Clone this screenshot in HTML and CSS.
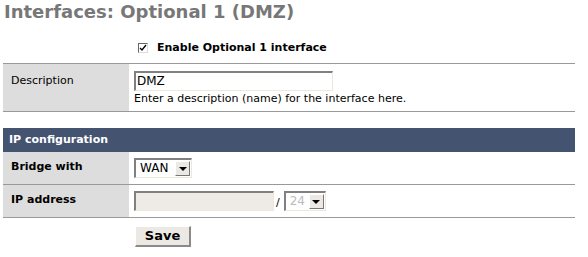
FILE: index.html
```html
<!DOCTYPE html>
<html>
<head>
<meta charset="utf-8">
<link rel="stylesheet" href="styles.css">
</head>
<body>
<h1 class="title">Interfaces: Optional 1 (DMZ)</h1>
<div class="form">
  <div class="enable-row">
    <div class="spacer-cell"></div>
    <div class="enable-cell">
      <span class="checkbox checked">
        <svg width="8" height="8" viewBox="0 0 8 8"><path d="M1 4 L3 6 L7 1" fill="none" stroke="#000" stroke-width="1.3"/></svg>
      </span>
      <span class="enable-label">Enable Optional 1 interface</span>
    </div>
  </div>
  <div class="row row-first">
    <div class="label-cell normal">Description</div>
    <div class="value-cell desc-cell">
      <div class="textbox">DMZ</div>
      <div class="help">Enter a description (name) for the interface here.</div>
    </div>
  </div>
  <div class="gap"></div>
  <div class="topic">IP configuration</div>
  <div class="row">
    <div class="label-cell">Bridge with</div>
    <div class="value-cell">
      <div class="select select-wan"><span class="sel-text">WAN</span><span class="sel-btn"><span class="arrow"></span></span></div>
    </div>
  </div>
  <div class="row">
    <div class="label-cell">IP address</div>
    <div class="value-cell ip-cell">
      <div class="textbox disabled ipbox"></div>
      <span class="slash">/</span>
      <div class="select select-mask disabled"><span class="sel-text">24</span><span class="sel-btn"><span class="arrow"></span></span></div>
    </div>
  </div>
  <div class="save-row">
    <div class="spacer-cell"></div>
    <div class="save-cell"><span class="button">Save</span></div>
  </div>
</div>
</body>
</html>
```

FILE: styles.css
```css
html, body {
  margin: 0;
  padding: 0;
  background: #fff;
}
body {
  font-family: "DejaVu Sans", Verdana, sans-serif;
  font-size: 11px;
  color: #000;
}
.title {
  margin: 0;
  padding: 1px 0 0 4px;
  height: 24px;
  font-size: 18px;
  font-weight: bold;
  color: #777;
  line-height: 22px;
}
.form {
  margin: 0 13px 0 3px;
  width: 572px;
}
.enable-row {
  display: flex;
  height: 39px;
  padding-top: 15px;
  box-sizing: border-box;
  border-bottom: 1px solid #999;
}
.spacer-cell {
  width: 126px;
  flex: none;
}
.enable-cell {
  display: flex;
  align-items: center;
  padding-left: 9px;
  height: 14px;
}
.checkbox {
  width: 8px;
  height: 8px;
  border-top: 1px solid #666;
  border-left: 1px solid #666;
  border-right: 1px solid #ddd;
  border-bottom: 1px solid #ddd;
  background: #fff;
  display: inline-flex;
  align-items: center;
  justify-content: center;
  margin-top: 1px;
}
.enable-label {
  font-weight: bold;
  margin-left: 9px;
}
.row {
  display: flex;
  border-bottom: 1px solid #999;
}
.label-cell {
  width: 126px;
  flex: none;
  background: #ddd;
  padding: 8px 0 0 8px;
  box-sizing: border-box;
  font-weight: bold;
  line-height: 13px;
}
.label-cell.normal {
  font-weight: normal;
  padding-top: 10px;
}
.value-cell {
  flex: 1;
  padding: 6px 0 5px 5px;
  height: 32px;
  box-sizing: border-box;
}
.desc-cell {
  height: 47px;
  padding-top: 7px;
}
.textbox {
  width: 199px;
  height: 20px;
  box-sizing: border-box;
  border-top: 2px solid #808080;
  border-left: 2px solid #808080;
  border-right: 1px solid #eee8dc;
  border-bottom: 1px solid #eee8dc;
  background: #fff;
  padding: 1px 0 0 1px;
  line-height: 14px;
  font-size: 12px;
}
.help {
  margin-top: 1px;
  line-height: 13px;
}
.gap {
  height: 16px;
}
.topic {
  background: #435370;
  color: #fff;
  font-weight: bold;
  height: 24px;
  line-height: 24px;
  padding-left: 6px;
}
.select {
  display: inline-flex;
  align-items: stretch;
  height: 20px;
  box-sizing: border-box;
  border-top: 2px solid #808080;
  border-left: 2px solid #808080;
  border-right: 1px solid #eee8dc;
  border-bottom: 1px solid #eee8dc;
  background: #fff;
  font-size: 12px;
}
.select-wan {
  width: 58px;
}
.sel-text {
  flex: 1;
  padding-left: 4px;
  line-height: 17px;
}
.sel-btn {
  width: 13px;
  margin: 1px 1px 1px 0;
  background: #ece9e4;
  border-top: 1px solid #fff;
  border-left: 1px solid #fff;
  border-right: 1px solid #777;
  border-bottom: 1px solid #777;
  display: flex;
  align-items: center;
  justify-content: center;
}
.arrow {
  width: 0;
  height: 0;
  border-left: 4px solid transparent;
  border-right: 4px solid transparent;
  border-top: 4px solid #000;
}
.ip-cell {
  display: flex;
  align-items: flex-start;
}
.ipbox {
  width: 140px;
}
.disabled {
  background: #eeebe7;
}
.select.disabled {
  background: #fff;
  color: #bbb;
}
.slash {
  margin: 5px 4px 0 2px;
  line-height: 13px;
}
.select-mask {
  width: 42px;
}
.save-row {
  display: flex;
  padding-top: 8px;
}
.save-cell {
  padding-left: 6px;
}
.button {
  display: inline-block;
  width: 56px;
  height: 21px;
  box-sizing: border-box;
  background: #ece9e4;
  border-top: 1px solid #fff;
  border-left: 1px solid #fff;
  border-right: 2px solid #8a8a8a;
  border-bottom: 2px solid #8a8a8a;
  font-weight: bold;
  font-size: 13px;
  text-align: center;
  line-height: 18px;
}
```
